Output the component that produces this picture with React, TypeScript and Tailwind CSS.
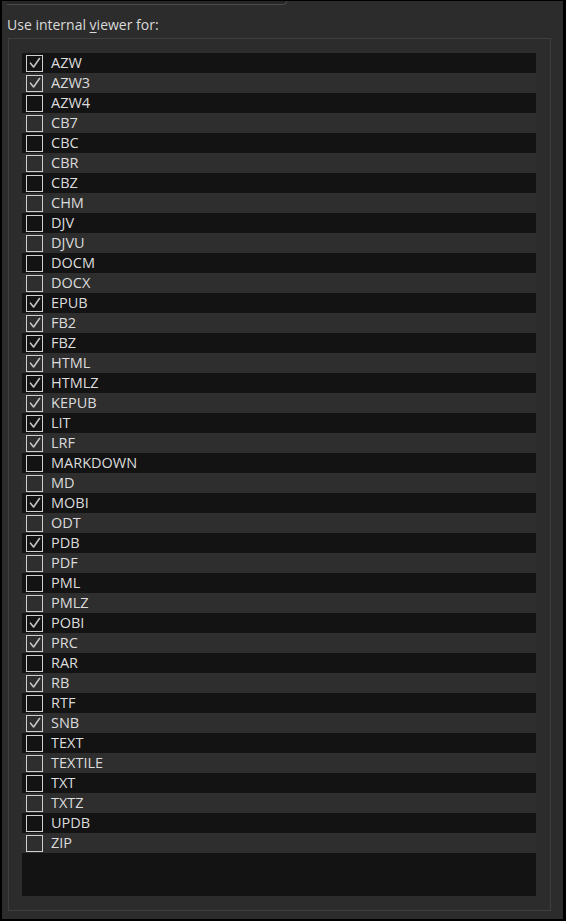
const formats: [string, boolean][] = [
  ["AZW", true],
  ["AZW3", true],
  ["AZW4", false],
  ["CB7", false],
  ["CBC", false],
  ["CBR", false],
  ["CBZ", false],
  ["CHM", false],
  ["DJV", false],
  ["DJVU", false],
  ["DOCM", false],
  ["DOCX", false],
  ["EPUB", true],
  ["FB2", true],
  ["FBZ", true],
  ["HTML", true],
  ["HTMLZ", true],
  ["KEPUB", true],
  ["LIT", true],
  ["LRF", true],
  ["MARKDOWN", false],
  ["MD", false],
  ["MOBI", true],
  ["ODT", false],
  ["PDB", true],
  ["PDF", false],
  ["PML", false],
  ["PMLZ", false],
  ["POBI", true],
  ["PRC", true],
  ["RAR", false],
  ["RB", true],
  ["RTF", false],
  ["SNB", true],
  ["TEXT", false],
  ["TEXTILE", false],
  ["TXT", false],
  ["TXTZ", false],
  ["UPDB", false],
  ["ZIP", false],
];

function CheckBox({ checked }: { checked: boolean }) {
  return (
    <div className="w-[17px] h-[17px] border-[1.5px] border-[#cfcfcf] flex items-center justify-center shrink-0">
      {checked && (
        <svg width="14" height="14" viewBox="0 0 14 14" fill="none">
          <path d="M2.5 7.2 L5.6 11 L11.5 2.5" stroke="#c4c4c4" strokeWidth="1.6" strokeLinecap="round" strokeLinejoin="round" />
        </svg>
      )}
    </div>
  );
}

export default function App() {
  return (
    <div className="w-[566px] h-[921px] bg-black flex flex-col" style={{ fontFamily: '"Open Sans", "Noto Sans", sans-serif' }}>
      <div className="flex-1 ml-[2px] mr-[3px] mb-[2px] mt-[1px] bg-[#2c2c2c] flex flex-col">
        <div className="h-[4px] w-[280px] ml-[5px] bg-[#262626] border-b border-r border-[#4a4a4a] rounded-br-[4px]" />
        <div className="pl-[5px] pt-[10px] text-[14px] leading-[19px] text-[#dadada]">
          Use internal <span className="underline underline-offset-2">v</span>iewer for:
        </div>
        <div className="mt-[4px] ml-[6px] w-[543px] h-[873px] border border-[#3e3e3e] pt-[14px] pl-[13px]">
          <div className="w-[514px] h-[843px] bg-[#131313]">
            {formats.map(([name, checked], i) => (
              <div
                key={name}
                className={`h-[20px] flex items-center gap-[8px] pl-[4px] ${i % 2 === 1 ? "bg-[#2e2e2e]" : "bg-[#131313]"}`}
              >
                <CheckBox checked={checked} />
                <span className="text-[14.5px] leading-[20px] text-[#dcdcdc]">{name}</span>
              </div>
            ))}
          </div>
        </div>
      </div>
    </div>
  );
}
